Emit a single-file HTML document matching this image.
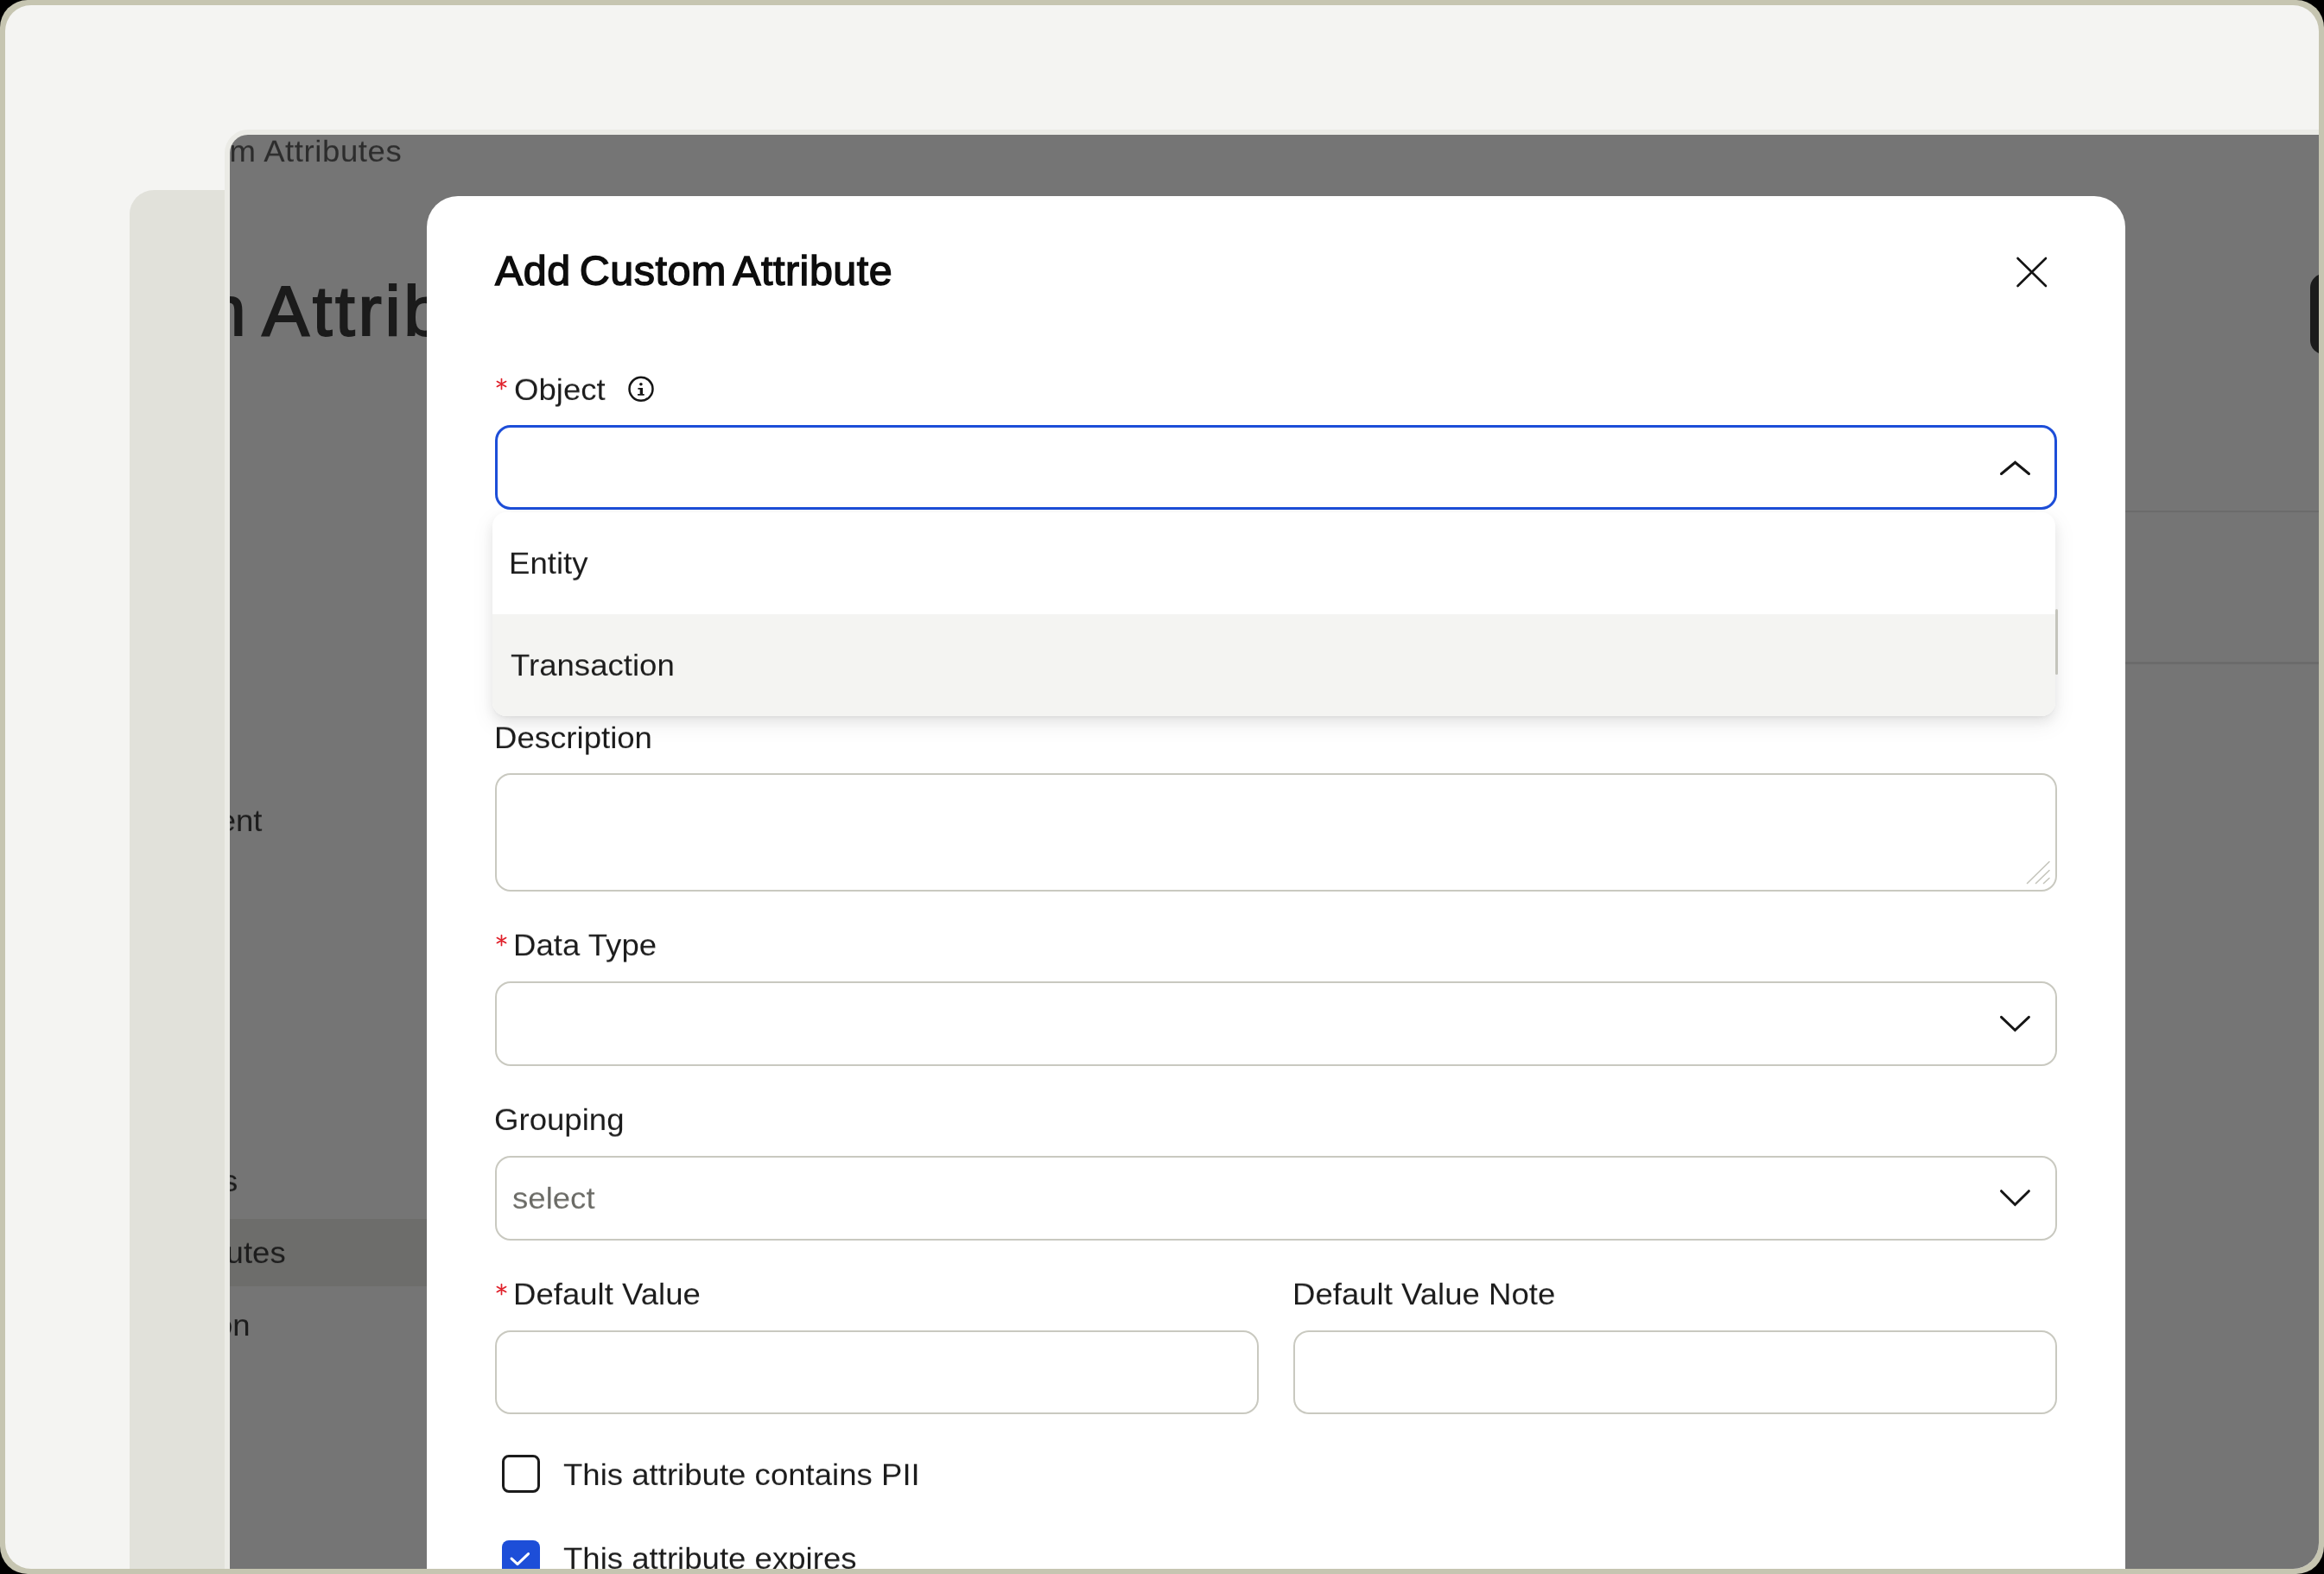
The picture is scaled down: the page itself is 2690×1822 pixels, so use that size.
<!DOCTYPE html>
<html>
<head>
<meta charset="utf-8">
<style>
html,body{margin:0;padding:0}
body{width:2690px;height:1822px;background:#000;overflow:hidden;position:relative;font-family:"Liberation Sans",sans-serif;}
.abs{position:absolute}
.t{position:absolute;white-space:nowrap;line-height:1;will-change:transform;transform:scaleY(0.94);transform-origin:0 31px;font-size:36.6px;color:#1c1c1c}
#frame{left:0;top:0;width:2690px;height:1822px;border-radius:32px;background:#c6c5b1}
#screen{left:0;top:0;width:2690px;height:1822px;background:#f4f4f2;clip-path:inset(6px round 30px);overflow:hidden}
.panel{left:150px;top:220px;width:300px;height:1700px;border-radius:28px;background:#e1e1da}
.winb{left:260px;top:150px;width:2600px;height:1800px;border-radius:27px;background:#ebebe6}
.win{left:266px;top:156px;width:2600px;height:1800px;border-radius:21px;background:#757575;overflow:hidden}
.modal{left:494px;top:227px;width:1966px;height:1700px;border-radius:36px;background:#fff}
.box{position:absolute;box-sizing:border-box;border:2px solid #c9c9c0;border-radius:18px;background:#fff}
.req{color:#e0282e}
</style>
</head>
<body>
<div id="frame" class="abs"></div>
<div id="screen" class="abs">
  <div class="abs panel"></div>
  <div class="abs winb"></div>
  <div class="abs win">
    <!-- coordinates inside window are page - (266,156) -->
    <div class="t" id="bc" style="left:-99px;top:1px;letter-spacing:0.57px;color:#2c2c2c">Custom Attributes</div>
    <div class="t" id="bigt" style="transform:none;font-size:82px;letter-spacing:3.65px;word-spacing:-7px;-webkit-text-stroke:2px #1b1b1b;left:-282.4px;top:163.3px;color:#1b1b1b">Custom Attributes</div>
    <div class="abs" style="left:0;top:1255.4px;width:600px;height:78px;background:#6d6d6b"></div>
    <div class="t" id="s1" style="left:-176.3px;top:775.5px">Management</div>
    <div class="t" id="s2" style="left:-123.2px;top:1193px">Settings</div>
    <div class="t" id="s3" style="left:-224.4px;top:1276px">Custom Attributes</div>
    <div class="t" id="s4" style="left:-194.4px;top:1359.7px">Configuration</div>
    <div class="abs" style="left:2194px;top:435px;width:500px;height:2px;background:#6b6b6b"></div>
    <div class="abs" style="left:2194px;top:610px;width:500px;height:3px;background:#6b6b6b"></div>
    <div class="abs" style="left:2408px;top:161px;width:60px;height:93px;border-radius:16px;background:#1b1b1b"></div>
  </div>
  <div class="abs modal"></div>
  <!-- modal content (page coords) -->
  <div class="t" id="title" style="transform:none;left:573px;top:289.2px;font-size:48.5px;letter-spacing:0.5px;word-spacing:-4px;-webkit-text-stroke:1.4px #0d0d0d;color:#0d0d0d">Add Custom Attribute</div>
  <svg class="abs" style="left:2320px;top:284px" width="64" height="62" viewBox="2320 284 64 62">
    <path d="M2335.5 299 L2368 331 M2368 299 L2335.5 331" stroke="#141414" stroke-width="2.6" stroke-linecap="round" fill="none"/>
  </svg>

  <!-- Object label -->
  <svg class="abs ast" style="left:572px;top:436px" width="18" height="18" viewBox="572 436 18 18"><path d="M580.5 438.6 V450.4 M575.4 441.55 L585.6 447.45 M575.4 447.45 L585.6 441.55" stroke="#e0202a" stroke-width="1.7" stroke-linecap="round"/></svg>
  <div class="t" style="left:594.5px;top:432.5px">Object</div>
  <svg class="abs" style="left:720px;top:428px" width="44" height="44" viewBox="720 428 44 44">
    <circle cx="742" cy="450.3" r="13.5" stroke="#161616" stroke-width="2.5" fill="none"/>
    <circle cx="741.9" cy="444.8" r="1.8" fill="#161616"/>
    <path d="M740.7 448.9 H744 V456 H745.7 V457.8 H738.1 V456 H740.7 V450.7 H738.4 V448.9 Z" fill="#161616"/>
  </svg>

  <!-- blue select -->
  <div class="box" style="left:573px;top:492px;width:1808px;height:98px;border:3px solid #1d4ed8"></div>
  <svg class="abs" style="left:2300px;top:520px" width="64" height="44" viewBox="2300 520 64 44">
    <path d="M2316.5 548.5 L2332.5 535.3 L2348.5 548.5" stroke="#161616" stroke-width="3" fill="none" stroke-linecap="round" stroke-linejoin="miter"/>
  </svg>

  <!-- Description -->
  <div class="t" style="left:571.5px;top:836px">Description</div>
  <div class="box" style="left:573px;top:895px;width:1808px;height:137px"></div>
  <svg class="abs" style="left:2330px;top:980px" width="60" height="60" viewBox="2330 980 60 60">
    <path d="M2346.5 1022.5 L2372 997.5 M2356.5 1022.5 L2372 1007.5 M2365.5 1022.5 L2372 1016.5" stroke="#c5c5bc" stroke-width="1.6" stroke-linecap="round" fill="none"/>
  </svg>

  <!-- Data Type -->
  <svg class="abs ast" style="left:572px;top:1079.5px" width="18" height="18" viewBox="572 436 18 18"><path d="M580.5 438.6 V450.4 M575.4 441.55 L585.6 447.45 M575.4 447.45 L585.6 441.55" stroke="#e0202a" stroke-width="1.7" stroke-linecap="round"/></svg>
  <div class="t" style="left:593.5px;top:1076px">Data Type</div>
  <div class="box" style="left:573px;top:1136px;width:1808px;height:97.5px"></div>
  <svg class="abs" style="left:2300px;top:1160px" width="64" height="44" viewBox="2300 1160 64 44">
    <path d="M2316.5 1177.3 L2332.4 1192.5 L2348.4 1177.3" stroke="#161616" stroke-width="3" fill="none" stroke-linecap="round"/>
  </svg>

  <!-- Grouping -->
  <div class="t" style="left:572px;top:1278px">Grouping</div>
  <div class="box" style="left:573px;top:1338px;width:1808px;height:97.5px"></div>
  <div class="t" style="left:593px;top:1369px;color:#6b6b66">select</div>
  <svg class="abs" style="left:2300px;top:1360px" width="64" height="44" viewBox="2300 1360 64 44">
    <path d="M2316.5 1378.7 L2332.4 1394.5 L2348.4 1378.7" stroke="#161616" stroke-width="3" fill="none" stroke-linecap="round"/>
  </svg>

  <!-- Default Value -->
  <svg class="abs ast" style="left:572px;top:1483.5px" width="18" height="18" viewBox="572 436 18 18"><path d="M580.5 438.6 V450.4 M575.4 441.55 L585.6 447.45 M575.4 447.45 L585.6 441.55" stroke="#e0202a" stroke-width="1.7" stroke-linecap="round"/></svg>
  <div class="t" style="left:593.5px;top:1480px">Default Value</div>
  <div class="t" style="left:1495.5px;top:1480px">Default Value Note</div>
  <div class="box" style="left:573px;top:1539.5px;width:884px;height:97.5px"></div>
  <div class="box" style="left:1497px;top:1539.5px;width:884px;height:97.5px"></div>

  <!-- checkboxes -->
  <div class="abs" style="left:580.5px;top:1684.3px;width:44px;height:44px;box-sizing:border-box;border:3px solid #1b1b1b;border-radius:8px"></div>
  <div class="t" style="left:652px;top:1688.5px">This attribute contains PII</div>
  <div class="abs" style="left:580.5px;top:1782.5px;width:44px;height:44px;border-radius:8px;background:#1d4ed8"></div>
  <svg class="abs" style="left:580px;top:1782px" width="44" height="40" viewBox="580 1782 44 40">
    <path d="M592 1804.2 L599 1810.6 L611.6 1798.6" stroke="#fff" stroke-width="3" fill="none" stroke-linecap="round" stroke-linejoin="round"/>
  </svg>
  <div class="t" style="left:652px;top:1786px">This attribute expires</div>

  <!-- dropdown -->
  <div class="abs" id="dd" style="left:570px;top:593px;width:1809px;height:235.5px;border-radius:16px;background:#fff;overflow:hidden;box-shadow:0 6px 16px rgba(0,0,0,.08),0 3px 6px -4px rgba(0,0,0,.12),0 9px 24px 4px rgba(0,0,0,.05)">
    <div class="abs" style="left:0;top:118px;width:1810px;height:118px;background:#f4f4f2"></div>
  </div>
  <div class="abs" style="left:2379px;top:704.7px;width:2.5px;height:76px;border-radius:2px;background:#c4c4bc"></div>
  <div class="t" style="left:588.5px;top:634px">Entity</div>
  <div class="t" style="left:590.5px;top:752px">Transaction</div>
</div>
</body>
</html>
